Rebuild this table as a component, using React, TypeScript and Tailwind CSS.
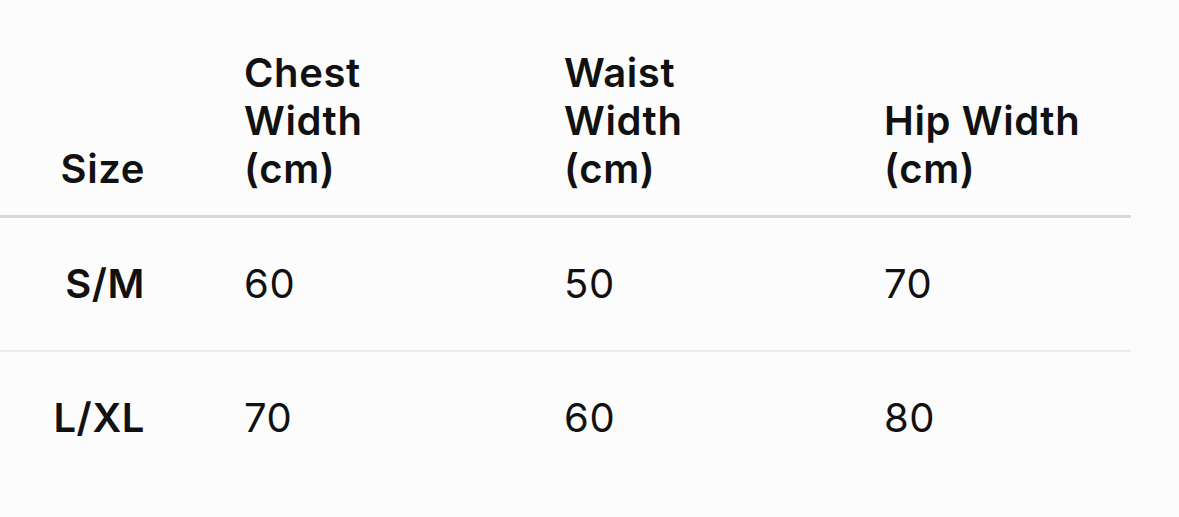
const rows = [
  { size: 'S/M', chest: '60', waist: '50', hip: '70' },
  { size: 'L/XL', chest: '70', waist: '60', hip: '80' },
];

export default function App() {
  return (
    <div className="w-[1179px] h-[517px] bg-[#fcfcfc] overflow-hidden" style={{ fontFamily: 'Inter, "Liberation Sans", sans-serif' }}>
      <table className="w-[1131px] table-fixed border-collapse text-[40px] leading-[48px] tracking-[0.6px] text-[#111]">
        <colgroup>
          <col className="w-[195px]" />
          <col className="w-[320px]" />
          <col className="w-[320px]" />
          <col className="w-[296px]" />
        </colgroup>
        <thead>
          <tr className="border-b-[3px] border-[#d9d9d9]">
            <th className="pt-[49px] pb-[22px] pr-[50px] text-right align-bottom font-semibold">Size</th>
            <th className="pt-[49px] pb-[22px] pl-[49px] text-left align-bottom font-semibold">
              Chest<br />Width<br />(cm)
            </th>
            <th className="pt-[49px] pb-[22px] pl-[49px] text-left align-bottom font-semibold">
              Waist<br />Width<br />(cm)
            </th>
            <th className="pt-[49px] pb-[22px] pl-[49px] text-left align-bottom font-semibold">
              Hip Width<br />(cm)
            </th>
          </tr>
        </thead>
        <tbody>
          {rows.map((r, i) => (
            <tr key={r.size} className={i === 0 ? 'border-b-2 border-[#ececec]' : ''}>
              <td className="h-[134px] pr-[50px] text-right align-middle font-semibold">{r.size}</td>
              <td className="h-[134px] pl-[49px] align-middle">{r.chest}</td>
              <td className="h-[134px] pl-[49px] align-middle">{r.waist}</td>
              <td className="h-[134px] pl-[49px] align-middle">{r.hip}</td>
            </tr>
          ))}
        </tbody>
      </table>
    </div>
  );
}
